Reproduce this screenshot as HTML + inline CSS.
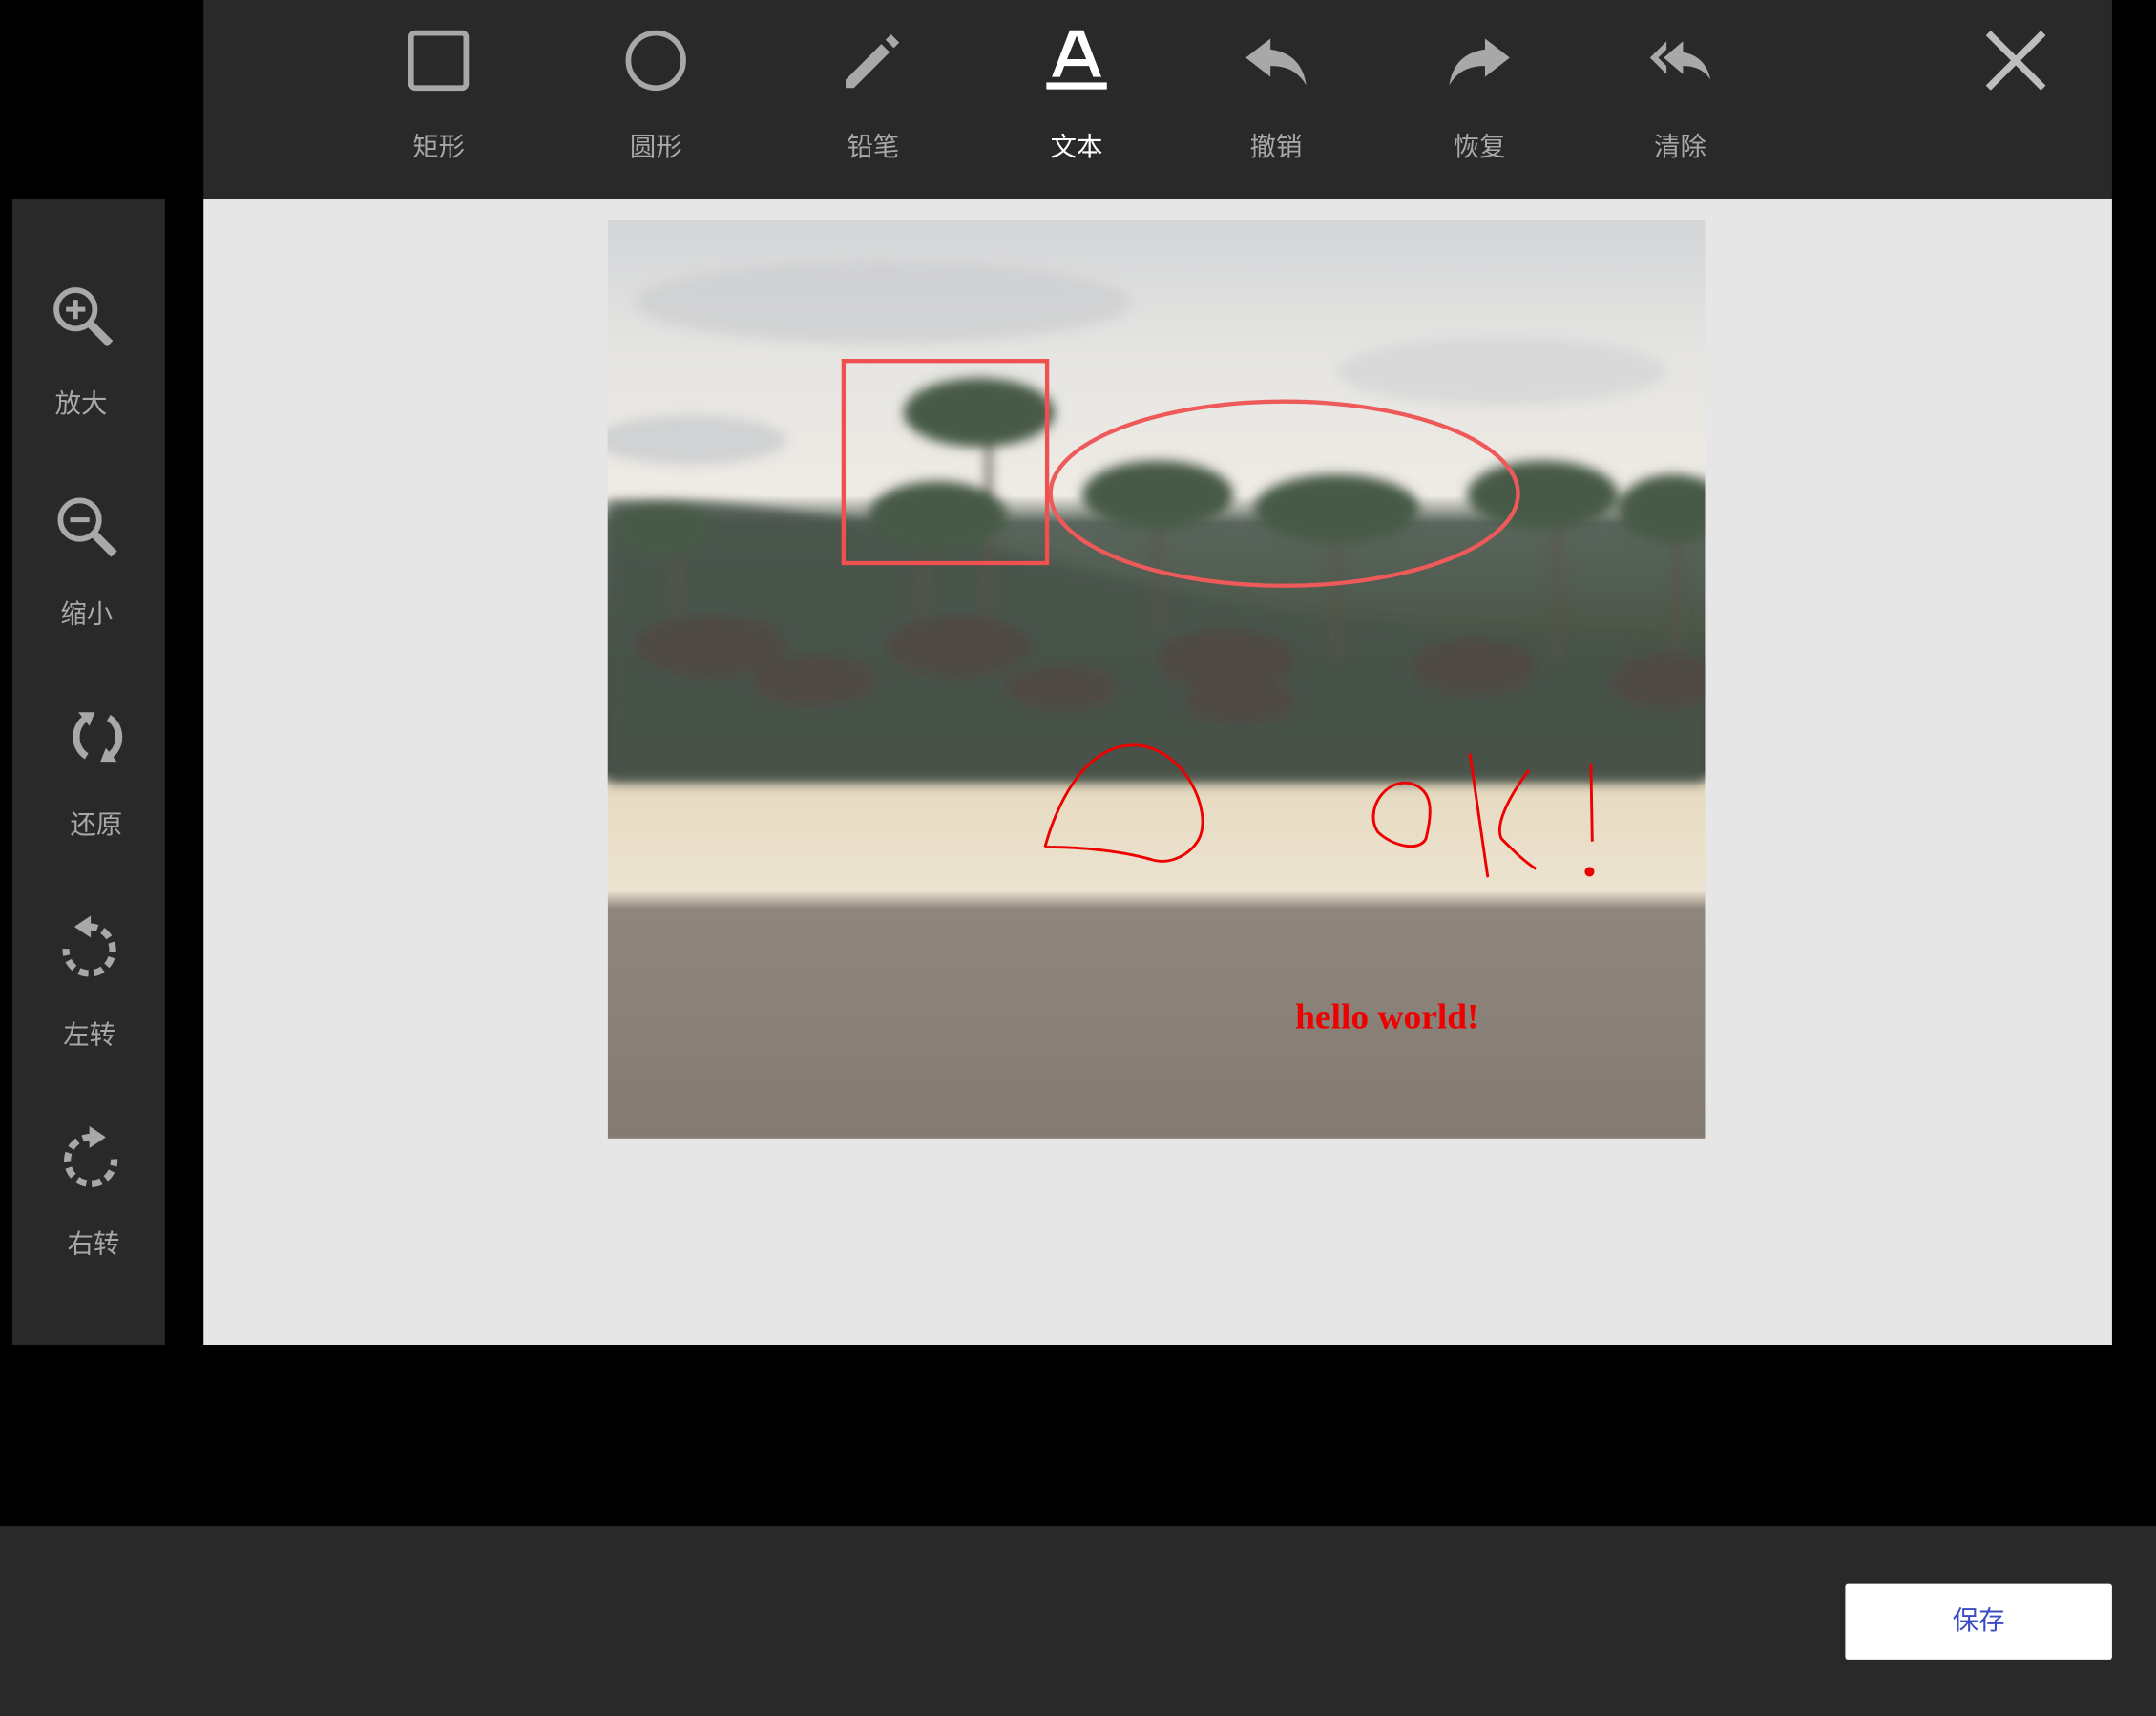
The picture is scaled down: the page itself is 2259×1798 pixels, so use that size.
<!DOCTYPE html>
<html><head><meta charset="utf-8"><style>
html,body{margin:0;padding:0;background:#000;width:2259px;height:1798px;overflow:hidden}
#w{position:absolute;left:0;top:0;width:1568px;height:1248px;transform:scale(1.4407);transform-origin:0 0;font-family:"Liberation Sans","Noto Sans CJK SC",sans-serif}
.abs{position:absolute}
.tb{background:#292929}
.lbl{position:absolute;font-size:19px;color:#a8a8a8;transform:translateX(-50%);white-space:nowrap}
.ic{position:absolute;transform:translate(-50%,-50%)}
</style></head><body><div id="w">
<div class="abs tb" style="left:148px;top:0;width:1388px;height:145px"></div>
<div class="abs tb" style="left:9px;top:145px;width:111px;height:833px"></div>
<div class="abs" style="left:148px;top:145px;width:1388px;height:833px;background:#e6e6e6"></div>
<div class="abs tb" style="left:0;top:1110px;width:1568px;height:138px"></div>
<div class="abs" style="left:1342px;top:1152px;width:194px;height:55px;background:#fff;border-radius:2px;color:#3b4bc4;font-size:19px;text-align:center;line-height:55px">保存</div>

<svg class="ic" style="left:319px;top:44px" width="48" height="48" viewBox="0 0 48 48"><rect x="4" y="4" width="40" height="40" rx="3" fill="none" stroke="#a8a8a8" stroke-width="4"/></svg>
<svg class="ic" style="left:477px;top:44px" width="48" height="48" viewBox="0 0 48 48"><circle cx="24" cy="24" r="20" fill="none" stroke="#a8a8a8" stroke-width="4"/></svg>
<svg class="ic" style="left:635px;top:44px" width="48" height="48" viewBox="0 0 48 48"><path d="M4 38 L30 12 L36 18 L10 44 L4 44Z M33 9 L37 5 L43 11 L39 15Z" fill="#a8a8a8"/></svg>
<svg class="ic" style="left:783px;top:44px" width="48" height="48" viewBox="0 0 48 48"><path d="M19 2 L29 2 L42 36 L36 36 L33 28 L15 28 L12 36 L6 36Z M17 23 L31 23 L24 6Z" fill="#fff"/><rect x="2" y="40" width="44" height="5" fill="#fff"/></svg>
<svg class="ic" style="left:928px;top:44px" width="48" height="48" viewBox="0 0 48 48"><path d="M20 8 L2 22 L20 36 L20 28 C32 28 40 32 46 42 C44 28 36 18 20 16Z" fill="#a8a8a8"/></svg>
<svg class="ic" style="left:1076px;top:44px" width="48" height="48" viewBox="0 0 48 48"><path d="M28 8 L46 22 L28 36 L28 28 C16 28 8 32 2 42 C4 28 12 18 28 16Z" fill="#a8a8a8"/></svg>
<svg class="ic" style="left:1222px;top:44px" width="48" height="48" viewBox="0 0 48 48"><path d="M14 10 L2 22 L14 34 L14 28 L8 22 L14 16Z M26 10 L12 22 L26 34 L26 28 C36 28 42 32 46 38 C44 28 38 20 26 18Z" fill="#a8a8a8"/></svg>
<svg class="ic" style="left:1466px;top:44px" width="48" height="48" viewBox="0 0 48 48"><path d="M4 4 L44 44 M44 4 L4 44" stroke="#bdbdbd" stroke-width="5"/></svg>
<div class="lbl" style="left:319px;top:92px">矩形</div>
<div class="lbl" style="left:477px;top:92px">圆形</div>
<div class="lbl" style="left:635px;top:92px">铅笔</div>
<div class="lbl" style="left:783px;top:92px;color:#fff">文本</div>
<div class="lbl" style="left:928px;top:92px">撤销</div>
<div class="lbl" style="left:1076px;top:92px">恢复</div>
<div class="lbl" style="left:1222px;top:92px">清除</div>

<svg class="ic" style="left:60px;top:230px" width="48" height="48" viewBox="0 0 48 48"><circle cx="19" cy="19" r="14" fill="none" stroke="#a8a8a8" stroke-width="4"/><path d="M29 29 L44 44" stroke="#a8a8a8" stroke-width="6"/><path d="M12 19 H26 M19 12 V26" stroke="#a8a8a8" stroke-width="3.5"/></svg>
<svg class="ic" style="left:63px;top:383px" width="48" height="48" viewBox="0 0 48 48"><circle cx="19" cy="19" r="14" fill="none" stroke="#a8a8a8" stroke-width="4"/><path d="M29 29 L44 44" stroke="#a8a8a8" stroke-width="6"/><path d="M12 19 H26" stroke="#a8a8a8" stroke-width="3.5"/></svg>
<svg class="ic" style="left:71px;top:536px" width="48" height="48" viewBox="0 0 48 48"><path d="M16 10 C6 16 6 32 16 38 M32 10 C42 16 42 32 32 38" fill="none" stroke="#a8a8a8" stroke-width="5"/><path d="M10 6 L22 6 L18 16Z M38 42 L26 42 L30 32Z" fill="#a8a8a8"/></svg>
<svg class="ic" style="left:64px;top:690px" width="48" height="48" viewBox="0 0 48 48"><path d="M24 8 A17 17 0 1 1 8 24" fill="none" stroke="#a8a8a8" stroke-width="5" stroke-dasharray="7 4"/><path d="M26 0 L26 16 L14 8Z" fill="#a8a8a8"/></svg>
<svg class="ic" style="left:67px;top:843px" width="48" height="48" viewBox="0 0 48 48"><path d="M24 8 A17 17 0 1 0 40 24" fill="none" stroke="#a8a8a8" stroke-width="5" stroke-dasharray="7 4"/><path d="M22 0 L22 16 L34 8Z" fill="#a8a8a8"/></svg>
<div class="lbl" style="left:59px;top:279px">放大</div>
<div class="lbl" style="left:63px;top:432px">缩小</div>
<div class="lbl" style="left:70px;top:585px">还原</div>
<div class="lbl" style="left:65px;top:738px">左转</div>
<div class="lbl" style="left:68px;top:890px">右转</div>

<svg class="abs" style="left:442px;top:160px" width="798" height="668" viewBox="0 0 798 668">
<defs><linearGradient id="g" x1="0" y1="0" x2="0" y2="1">
<stop offset="0" stop-color="#d3d5d8"/><stop offset="0.15" stop-color="#e6e5e2"/><stop offset="0.3" stop-color="#efebe5"/>
<stop offset="0.33" stop-color="#5a665d"/><stop offset="0.5" stop-color="#45503f"/><stop offset="0.6" stop-color="#4a4a42"/>
<stop offset="0.615" stop-color="#e6dac0"/><stop offset="0.73" stop-color="#ece3d0"/>
<stop offset="0.75" stop-color="#8e867c"/><stop offset="1" stop-color="#847b72"/></linearGradient>
<filter id="b"><feGaussianBlur stdDeviation="4"/></filter></defs>
<rect width="798" height="668" fill="url(#g)"/>
<g filter="url(#b)">
<ellipse cx="200" cy="60" rx="180" ry="30" fill="#c8cacd" opacity="0.6"/>
<ellipse cx="650" cy="110" rx="120" ry="25" fill="#cfd0d2" opacity="0.6"/>
<ellipse cx="60" cy="160" rx="70" ry="18" fill="#c5c8cc" opacity="0.7"/>
<path d="M0 205 C80 200 160 215 260 235 C340 250 420 275 520 290 C620 300 700 305 798 310 L798 410 L0 410Z" fill="#48544b" opacity="0.85"/>
<g stroke="#5a5248" stroke-width="4"><path d="M277 140 V300"/><path d="M400 190 V300"/><path d="M530 210 V320"/><path d="M690 200 V320"/><path d="M778 210 V320"/><path d="M230 200 V310"/><path d="M50 220 V300"/></g>
<g fill="#475a46"><ellipse cx="270" cy="140" rx="55" ry="25"/><ellipse cx="400" cy="200" rx="55" ry="25"/><ellipse cx="530" cy="210" rx="60" ry="25"/><ellipse cx="680" cy="200" rx="55" ry="25"/><ellipse cx="775" cy="210" rx="40" ry="25"/><ellipse cx="240" cy="215" rx="50" ry="25"/><ellipse cx="40" cy="225" rx="35" ry="20"/></g>
<g fill="#4f4944"><ellipse cx="75" cy="310" rx="55" ry="22"/><ellipse cx="255" cy="310" rx="52" ry="22"/><ellipse cx="450" cy="320" rx="50" ry="22"/><ellipse cx="630" cy="325" rx="45" ry="20"/><ellipse cx="770" cy="335" rx="40" ry="20"/><ellipse cx="150" cy="335" rx="45" ry="18"/><ellipse cx="330" cy="340" rx="40" ry="16"/><ellipse cx="460" cy="350" rx="40" ry="16"/></g>
</g>
<rect x="171.5" y="102.5" width="148" height="147" fill="none" stroke="#ef5050" stroke-width="3"/>
<ellipse cx="492" cy="199" rx="170" ry="67" fill="none" stroke="#ee5a5a" stroke-width="3"/>
<g fill="none" stroke="#e00" stroke-width="2">
<path d="M318 456 C325 430 345 380 385 382 C420 385 440 430 430 450 C425 460 410 470 395 465 C370 458 340 456 318 456"/>
<path d="M585 410 C565 405 550 430 560 445 C570 455 590 460 595 450 C600 430 600 415 585 410"/>
<path d="M627 388 L640 478 M670 400 C655 420 645 440 650 450 C660 460 665 465 675 472"/>
<path d="M715 395 L716 452"/></g>
<circle cx="714" cy="474" r="3.5" fill="#e00"/>
<text x="500" y="588" font-family="'Liberation Serif',serif" font-size="26" font-weight="bold" fill="#e00">hello world!</text>
</svg>
</div></body></html>
